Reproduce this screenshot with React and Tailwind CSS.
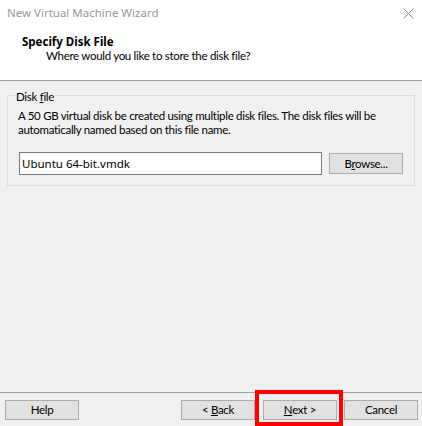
export default function App() {
  const btn =
    "h-[20px] w-[74px] bg-[#e1e1e1] border border-[#adadad] text-[11.5px] leading-[18px] text-black flex items-center justify-center";

  return (
    <div className="relative w-[422px] h-[426px] flex flex-col bg-[#f0f0f0] font-['Lato',sans-serif] text-[11.5px] tracking-[-0.3px] text-black overflow-hidden">
      {/* header */}
      <div className="h-[81px] shrink-0 bg-white border-b border-[#a0a0a0] pt-[5px]">
        <div className="flex items-center justify-between pl-[7px] pr-[8px] leading-[15px]">
          <span className="text-[#9a9a9a] font-['Noto_Sans',sans-serif] text-[11.5px] tracking-normal">
            New Virtual Machine Wizard
          </span>
          <svg width="11" height="11" viewBox="0 0 11 11" className="mt-[2px]">
            <path d="M0.5 0.5 L10.5 10.5 M10.5 0.5 L0.5 10.5" stroke="#8a8a8a" strokeWidth="1" fill="none" />
          </svg>
        </div>
        <div className="mt-[15px] ml-[22px] font-bold font-['Noto_Sans',sans-serif] text-[11.5px] tracking-normal leading-[14px]">
          Specify Disk File
        </div>
        <div className="ml-[46px] leading-[14px]">Where would you like to store the disk file?</div>
      </div>

      {/* body */}
      <div className="flex-1 pt-[14px]">
        <div className="relative mx-[7px] h-[91px] border border-[#dcdcdc] pl-[10px] pt-[13px]">
          <span className="absolute left-[7px] top-[-7px] px-[1px] bg-[#f0f0f0] leading-[16px]">
            Disk <u>f</u>ile
          </span>
          <p className="leading-[14px] whitespace-nowrap">
            A 50 GB virtual disk be created using multiple disk files. The disk files will be
            <br />
            automatically named based on this file name.
          </p>
          <div className="mt-[15px] flex items-center gap-[7px]">
            <input
              type="text"
              defaultValue="Ubuntu 64-bit.vmdk"
              className="ml-[1px] h-[23px] w-[303px] bg-white border border-[#7a7a7a] px-[2px] font-['Noto_Sans',sans-serif] text-[11.5px] tracking-normal text-black outline-none"
            />
            <button className="h-[21px] w-[74px] bg-[#e1e1e1] border border-[#adadad] text-[11.5px] leading-[19px]">
              <span>
                B<u>r</u>owse...
              </span>
            </button>
          </div>
        </div>
      </div>

      {/* footer */}
      <div className="h-[34px] shrink-0 border-t border-[#a0a0a0] flex items-start pt-[7px] pl-[5px] pr-[4px]">
        <button className={btn}>Help</button>
        <button className={btn + " ml-auto"}>
          <span>
            &lt; <u>B</u>ack
          </span>
        </button>
        <button className={btn + " ml-[8px]"}>
          <span>
            <u>N</u>ext &gt;
          </span>
        </button>
        <button className={btn + " ml-[7px]"}>Cancel</button>
      </div>

      {/* highlight */}
      <div className="absolute left-[255px] top-[390px] w-[88px] h-[36px] border-[4px] border-[#ff0000]" />
    </div>
  );
}
